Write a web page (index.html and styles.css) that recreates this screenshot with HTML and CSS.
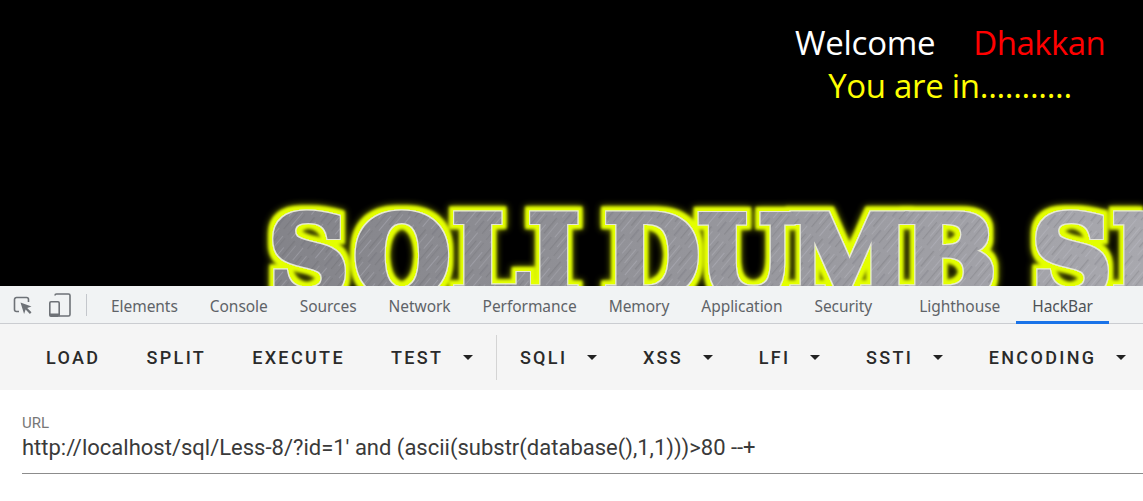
FILE: index.html
```html
<!DOCTYPE html>
<html lang="en">
<head>
<meta charset="utf-8">
<title>Less-8</title>
<link rel="stylesheet" href="styles.css">
</head>
<body>
<section class="hero">
  <div class="greeting">
    <div>Welcome<span class="name">Dhakkan</span></div>
    <div class="status">You are in<span class="dots">...........</span></div>
  </div>
  <svg class="banner" viewBox="0 0 1143 90" width="1143" height="90">
    <defs>
      <pattern id="lines" width="31" height="31" patternUnits="userSpaceOnUse" patternTransform="rotate(-50)">
        <rect x="0" y="2" width="19" height="1" fill="#c8c8d4" opacity=".3"/>
        <rect x="11" y="6" width="20" height="1.4" fill="#55555c" opacity=".22"/>
        <rect x="4" y="10" width="24" height=".8" fill="#d0d0d8" opacity=".24"/>
        <rect x="0" y="14" width="13" height="1.6" fill="#5c5c62" opacity=".2"/>
        <rect x="15" y="17" width="16" height="1" fill="#c8c8d4" opacity=".28"/>
        <rect x="2" y="21" width="22" height="1.2" fill="#55555c" opacity=".2"/>
        <rect x="9" y="25" width="18" height=".9" fill="#d0d0d8" opacity=".26"/>
        <rect x="0" y="28" width="27" height="1.3" fill="#5c5c62" opacity=".18"/>
      </pattern>
      <linearGradient id="sheen" gradientUnits="userSpaceOnUse" x1="260" y1="0" x2="1143" y2="0">
        <stop offset="0" stop-color="#838389"/>
        <stop offset="1" stop-color="#a8a8ae"/>
      </linearGradient>
      <pattern id="metal" width="1143" height="90" patternUnits="userSpaceOnUse">
        <rect width="1143" height="90" fill="url(#sheen)"/>
        <rect width="1143" height="90" fill="url(#lines)"/>
      </pattern>
      <filter id="glow" filterUnits="userSpaceOnUse" x="0" y="-10" width="1143" height="130">
        <feMorphology in="SourceAlpha" operator="dilate" radius="1" result="rim"/>
        <feFlood flood-color="#e6e6d8"/>
        <feComposite in2="rim" operator="in" result="edge"/>
        <feMorphology in="SourceAlpha" operator="dilate" radius="5" result="fat"/>
        <feGaussianBlur in="fat" stdDeviation="1.4" result="core"/>
        <feFlood flood-color="#e4ff00"/>
        <feComposite in2="core" operator="in" result="yellow"/>
        <feGaussianBlur in="fat" stdDeviation="3.5" result="soft"/>
        <feFlood flood-color="#a4b200"/>
        <feComposite in2="soft" operator="in" result="halo"/>
        <feMerge>
          <feMergeNode in="halo"/>
          <feMergeNode in="yellow"/>
          <feMergeNode in="edge"/>
          <feMergeNode in="SourceGraphic"/>
        </feMerge>
      </filter>
    </defs>
    <g class="banner-type" filter="url(#glow)">
      <text y="99" x="269 354 452 528">SOLI</text>
      <text y="99" x="604 698 789 903">DUMB</text>
      <text y="99" x="1032 1112">SE</text>
    </g>
  </svg>
</section>

<nav class="tabs">
  <div class="tool-icons">
    <svg class="icon" width="20" height="20" viewBox="0 0 20 20" fill="none">
      <path d="M6 16.5H3.5a2 2 0 0 1-2-2V4.5a2 2 0 0 1 2-2h10a2 2 0 0 1 2 2V7" stroke="#6e7277" stroke-width="1.6"/>
      <path d="M7.5 7.5l11 4-4.3 1.5 4.3 4.3-1.6 1.6-4.3-4.3-1.5 4.3z" fill="#6e7277"/>
    </svg>
    <svg class="icon" width="23" height="24" viewBox="0 0 23 24" fill="none">
      <path d="M7 2.5a1.5 1.5 0 0 1 1.5-1.5h12a1.5 1.5 0 0 1 1.5 1.5v19a1.5 1.5 0 0 1-1.5 1.5H11" stroke="#6e7277" stroke-width="1.6"/>
      <rect x="1.8" y="8.8" width="9.4" height="14.4" rx="1.2" stroke="#6e7277" stroke-width="1.6"/>
      <rect x="1.8" y="20.5" width="9.4" height="2.7" fill="#6e7277"/>
    </svg>
    <span class="tool-sep"></span>
  </div>
  <a class="tab">Elements</a>
  <a class="tab">Console</a>
  <a class="tab">Sources</a>
  <a class="tab">Network</a>
  <a class="tab">Performance</a>
  <a class="tab">Memory</a>
  <a class="tab">Application</a>
  <a class="tab">Security</a>
  <a class="tab tab-gap">Lighthouse</a>
  <a class="tab tab-active">HackBar</a>
</nav>

<div class="toolbar">
  <button class="btn">LOAD</button>
  <button class="btn">SPLIT</button>
  <button class="btn">EXECUTE</button>
  <button class="btn">TEST<i class="caret"></i></button>
  <span class="divider"></span>
  <button class="btn">SQLI<i class="caret"></i></button>
  <button class="btn">XSS<i class="caret"></i></button>
  <button class="btn">LFI<i class="caret"></i></button>
  <button class="btn">SSTI<i class="caret"></i></button>
  <button class="btn">ENCODING<i class="caret"></i></button>
</div>

<section class="field">
  <label class="field-label">URL</label>
  <div class="field-value">http://localhost/sql/Less-8/?id=1' and (ascii(substr(database(),1,1)))&gt;80 --+</div>
</section>
</body>
</html>
```
FILE: styles.css
```css
* { box-sizing: border-box; }
html, body { margin: 0; height: 100%; overflow: hidden; background: #fff; }
body { width: 1143px; height: 501px; }

.hero {
  height: 286px;
  background: #000;
  overflow: hidden;
  display: flex;
  flex-direction: column;
  justify-content: space-between;
}
.greeting {
  margin: 21px 0 0 795px;
  width: 310px;
  text-align: center;
  font: 33px/43px "Open Sans", "Noto Sans", sans-serif;
  letter-spacing: -0.25px;
  color: #fff;
  white-space: nowrap;
}
.name { color: #f00; margin-left: 38px; letter-spacing: -0.55px; }
.status { color: #ff0; letter-spacing: -0.3px; }
.dots { color: #ff0; }
.banner { display: block; flex: none; }
.banner-type text {
  font: 700 110px "DejaVu Serif", serif;
  fill: url(#metal);
  stroke: url(#metal);
  stroke-width: 6;
  stroke-linejoin: miter;
}

.tabs {
  height: 38px;
  background: #f1f3f4;
  border-bottom: 1px solid #cbcdd1;
  display: flex;
  align-items: stretch;
  font: 15.5px "Noto Sans", "Open Sans", sans-serif;
  letter-spacing: -0.05px;
  color: #5f6368;
}
.tool-icons {
  width: 95px;
  display: flex;
  align-items: center;
  padding-left: 13px;
  flex: none;
}
.icon { flex: none; }
.icon + .icon { margin-left: 15px; }
.tool-sep { width: 1px; height: 22px; margin-left: 15px; background: #c4c7cc; }
.tab {
  padding: 5px 16px 0;
  display: flex;
  align-items: center;
  border-bottom: 3px solid transparent;
  margin-bottom: -1px;
  white-space: nowrap;
}
.tab-gap { margin-left: 15px; }
.tab-active { border-bottom-color: #1a73e8; color: #4d5156; }

.toolbar {
  height: 66px;
  background: #f5f5f5;
  display: flex;
  align-items: center;
  padding-left: 23px;
}
.btn {
  appearance: none;
  background: none;
  border: 0;
  padding: 0 23px;
  display: flex;
  align-items: center;
  font: 500 18px Roboto, sans-serif;
  letter-spacing: 2.35px;
  color: #2a2a2a;
  white-space: nowrap;
}
.caret {
  width: 0;
  height: 0;
  margin-left: 19.5px;
  border-left: 5.5px solid transparent;
  border-right: 5.5px solid transparent;
  border-top: 5.5px solid #222;
}
.divider { width: 1px; height: 45px; background: #d4d4d4; flex: none; }

.field {
  margin: 23px 0 0 22px;
  height: 61px;
  border-bottom: 1px solid #8c8c8c;
}
.field-label {
  display: block;
  font: 15px/20px Roboto, sans-serif;
  color: #777;
}
.field-value {
  font: 22px/30px Roboto, sans-serif;
  color: #3a3a3a;
  white-space: nowrap;
}
```
